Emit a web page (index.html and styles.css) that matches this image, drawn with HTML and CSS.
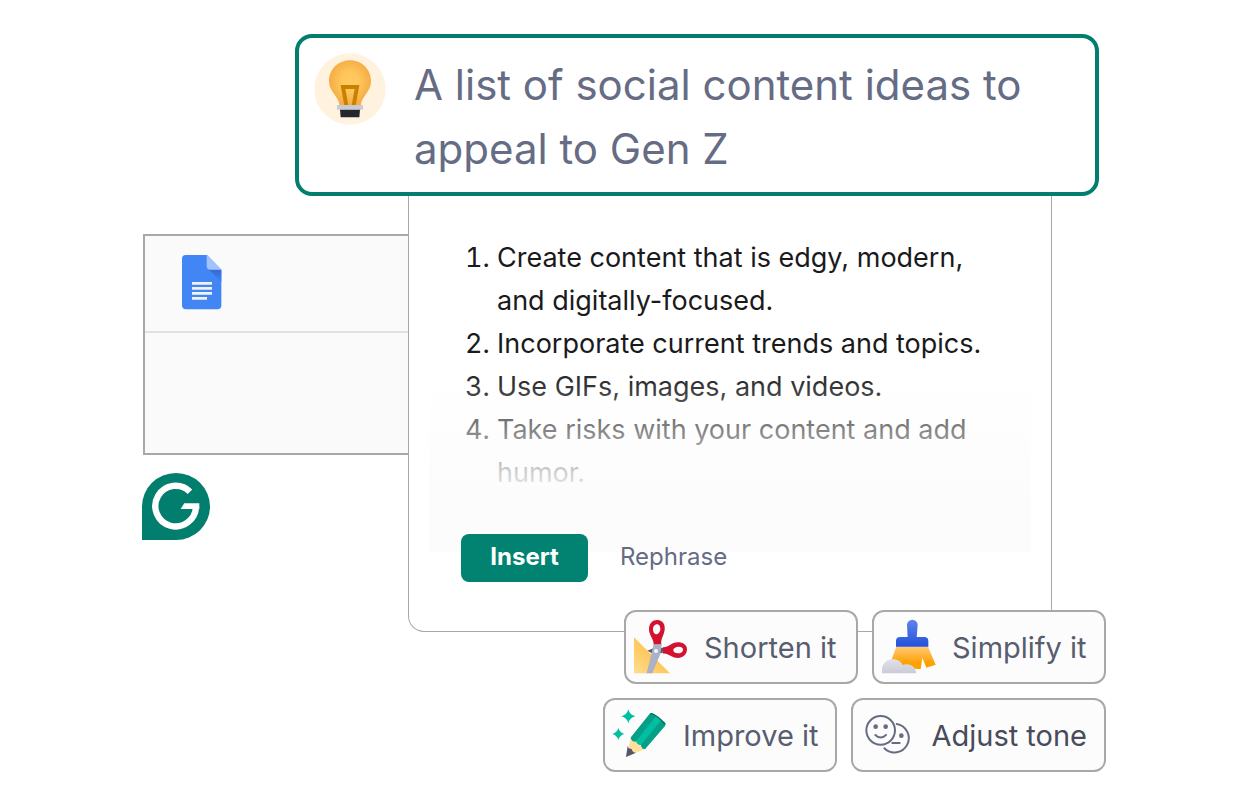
FILE: index.html
```html
<!DOCTYPE html>
<html lang="en">
<head>
    <meta charset="UTF-8">
    <meta name="viewport" content="width=device-width, initial-scale=1.0">
    <title>Content ideas</title>
    <link rel="stylesheet" href="styles.css">
</head>
<body>
    <div class="scene">
        <aside class="side">
            <div class="document">
                <div class="document-header">
                    <svg width="40" height="55" viewBox="0 0 120 165" role="img" aria-label="Document">
                        <defs>
                            <linearGradient id="fold" x1="0" y1="0" x2="0" y2="1">
                                <stop offset="0" stop-color="#3367d6"/>
                                <stop offset="1" stop-color="#4285f4"/>
                            </linearGradient>
                        </defs>
                        <path fill="#4285f4" d="M11 0h64l43 44v107q0 12-12 12H12Q0 163 0 151V11Q0 0 11 0z"/>
                        <path fill="url(#fold)" d="M79 42l39 39V44z"/>
                        <path fill="#a1c2fa" d="M74 0v33q0 11 11 11h34z"/>
                        <path fill="#f1f1f1" d="M30 81h60v8H30zM30 96h60v8H30zM30 111h60v8H30zM30 126h45v8H30z"/>
                    </svg>
                </div>
                <div class="document-body"></div>
            </div>
            <svg class="logo" width="68" height="67" viewBox="0 0 204 201" role="img" aria-label="Grammarly">
                <path fill="#027e6f" d="M102 0a102 100.500 0 0 1 0 201H0V100.500A102 100.500 0 0 1 102 0z"/>
                <path fill="none" stroke="#fff" stroke-width="19" d="M144 56A61 61 0 1 0 162 100"/>
                <path fill="#fff" d="M127 91h45v17h-56z"/>
            </svg>
        </aside>

        <main class="assistant">
            <section class="prompt">
                <svg class="bulb" width="72" height="72" viewBox="0 0 216 216" aria-hidden="true">
                    <defs>
                        <radialGradient id="glow" cx=".5" cy=".47" r=".5">
                            <stop offset="0" stop-color="#ffca60"/>
                            <stop offset=".4" stop-color="#fec75d"/>
                            <stop offset="1" stop-color="#f6ad45"/>
                        </radialGradient>
                    </defs>
                    <circle cx="108" cy="108" r="107" fill="#fff2de"/>
                    <path fill="url(#glow)" d="M108 22c36 0 63 28 63 62 0 34-28 43-31 75H77c-3-32-32-41-32-75 0-34 27-62 63-62z"/>
                    <path fill="none" stroke="#c98200" stroke-width="12" d="M97 158L87 102h42l-10 56"/>
                    <path fill="#c9cad7" d="M69 156h78v14H69z"/>
                    <path fill="#26272d" d="M78 170h60l-2 23H80z"/>
                </svg>
                <h1 class="prompt-text">A list of social content ideas to appeal to Gen Z</h1>
            </section>

            <section class="card">
                <div class="answer">
                    <ol class="ideas">
                        <li>Create content that is edgy, modern, and digitally-focused.</li>
                        <li>Incorporate current trends and topics.</li>
                        <li>Use GIFs, images, and videos.</li>
                        <li>Take risks with your content and add humor.</li>
                    </ol>
                </div>
                <div class="actions">
                    <button class="insert" type="button">Insert</button>
                    <button class="rephrase" type="button">Rephrase</button>
                </div>
            </section>

            <div class="chips">
                <button class="chip" type="button">
                    <svg width="56" height="56" viewBox="45 57 168 168" aria-hidden="true">
                        <defs>
                            <linearGradient id="ruler" x1="0" y1="1" x2=".6" y2=".4">
                                <stop offset="0" stop-color="#ffdd91"/>
                                <stop offset="1" stop-color="#fec34f"/>
                            </linearGradient>
                        </defs>
                        <path fill="url(#ruler)" d="M48 112l108 108H48z"/>
                        <path fill="#545b70" d="M88 152l18-7 30-2-2 16-29 2z"/>
                        <path fill="#d3122f" fill-rule="evenodd" d="M107 134c2-15-15-29-14-48 1-17 12-27 26-26 15 1 23 13 21 29-2 17-13 28-10 45zM117 73c-7 0-12 7-12 15s4 15 9 15c8 0 13-9 13-16 0-8-4-14-10-14z"/>
                        <path fill="#d3122f" fill-rule="evenodd" d="M135 142c16 1 26-15 44-15 17 0 28 8 28 21 0 15-12 26-28 26-19 0-27-15-44-13zM183 140c-8 0-17 4-17 11 0 6 6 9 14 9 9 0 15-5 15-11s-5-9-12-9z"/>
                        <path fill="#acb1c4" d="M107 133h24l-4 29-24 58H86l14-58z"/>
                        <circle cx="114" cy="153" r="6" fill="#f4f5fa"/>
                    </svg>
                    <span>Shorten it</span>
                </button>
                <button class="chip" type="button">
                    <svg width="56" height="56" viewBox="51 57 168 168" aria-hidden="true">
                        <defs>
                            <linearGradient id="handle" x1="0" y1="0" x2="0" y2="1">
                                <stop offset="0" stop-color="#6085ed"/>
                                <stop offset="1" stop-color="#2450dc"/>
                            </linearGradient>
                            <linearGradient id="bristles" x1="0" y1="0" x2="0" y2="1">
                                <stop offset="0" stop-color="#ffca73"/>
                                <stop offset=".75" stop-color="#fea000"/>
                            </linearGradient>
                            <linearGradient id="dust" x1="0" y1="0" x2="0" y2="1">
                                <stop offset="0" stop-color="#e0e1e9"/>
                                <stop offset="1" stop-color="#c9cbd8"/>
                            </linearGradient>
                        </defs>
                        <path fill="url(#bristles)" d="M97 140h95l23 54-28 9-12-30-5 34q-44 2-89-23z"/>
                        <path fill="url(#handle)" d="M129 75a16 16 0 0 1 32 0l-3 36h23q12 0 12 12v17H96v-17q0-12 12-12h23z"/>
                        <path fill="url(#dust)" d="M54 220v-10c0-18 13-32 32-32 15 0 25 7 30 17 18-7 39 4 40 21v4z"/>
                    </svg>
                    <span>Simplify it</span>
                </button>
                <button class="chip" type="button">
                    <svg width="56" height="56" viewBox="54 51 168 168" aria-hidden="true">
                        <path fill="#00bfa0" d="M103 58q4 17 21 21-17 4-21 21-4-17-21-21 17-4 21-21zM73 114q4 14 18 18-14 4-18 18-4-14-18-18 14-4 18-18z"/>
                        <path fill="#ffdf9d" d="M111 142l-15 58 60-24z"/>
                        <path fill="#535769" d="M101 168q2 9 12 9 2 11 13 11l-30 13z"/>
                        <path fill="#00bfa0" d="M167 72q4-5 11-1l34 26q5 4 1 10l-60 70q-9 1-12-12-10 2-15-11-11 3-16-11z"/>
                        <path fill="#069e87" d="M167 72q4-5 11-1l9 6-61 77q-11 3-16-11zM202 90l10 7q5 4 1 10l-60 70q-9 1-12-12z"/>
                        <path fill="none" stroke="#08745f" stroke-width="4" d="M170 71q12 2 24 12 11 8 18 20"/>
                    </svg>
                    <span>Improve it</span>
                </button>
                <button class="chip chip-dark" type="button">
                    <svg width="56" height="56" viewBox="45 51 168 168" aria-hidden="true">
                        <g fill="none" stroke="#656c84" stroke-width="6" stroke-linecap="round">
                            <circle cx="107" cy="121" r="43"/>
                            <path d="M91 135q16 15 32 0M155 102a43 43 0 1 1-37 73M142 159h22"/>
                        </g>
                        <g fill="#656c84">
                            <circle cx="92" cy="110" r="7"/>
                            <circle cx="122" cy="110" r="7"/>
                            <circle cx="169" cy="137" r="7"/>
                        </g>
                    </svg>
                    <span>Adjust tone</span>
                </button>
            </div>
        </main>
    </div>
</body>
</html>
```

FILE: styles.css
```css
* {
    box-sizing: border-box;
}
body {
    margin: 0;
    background-color: #fff;
    color: #1a1a1c;
    font-family: Inter, "Liberation Sans", sans-serif;
}
button {
    font-family: inherit;
    cursor: pointer;
}
svg {
    display: block;
    flex-shrink: 0;
}
.scene {
    display: flex;
    padding: 34px 142px;
}
.side {
    flex: 0 0 266px;
    padding-top: 200px;
}
.document {
    margin-left: 1px;
    border: 2px solid #a8a8a8;
    border-right: none;
    background-color: #fafafa;
}
.document-header {
    padding: 19px 37px 21px;
    border-bottom: 2px solid #e1e1e1;
}
.document-body {
    height: 120px;
}
.logo {
    margin-top: 18px;
}
.assistant {
    flex: 1;
    min-width: 0;
}
/* the prompt hangs over the document on the left */
.prompt {
    display: flex;
    align-items: flex-start;
    gap: 28px;
    margin: 0 7px 0 -113px;
    padding: 15px 32px 11px 15px;
    border: 4px solid #027e6f;
    border-radius: 17px;
    background-color: #fff;
}
.prompt-text {
    margin: 0;
    color: #656c84;
    font-size: 42px;
    font-weight: 400;
    line-height: 64px;
}
.card {
    margin-right: 54px;
    padding: 0 20px 49px;
    border: 1px solid #a8a8a8;
    border-top: none;
    border-radius: 0 0 16px 16px;
    background-color: #fff;
}
.answer {
    position: relative;
    height: 356px;
    padding: 40px 32px 0 36px;
}
/* fades the end of the list out */
.answer::after {
    content: "";
    position: absolute;
    inset: 156px 0 0;
    background: linear-gradient(rgba(252, 252, 252, 0), rgba(252, 252, 252, 0.1) 16%, rgba(252, 252, 252, 0.45) 38%, rgba(252, 252, 252, 0.8) 60%, #fcfcfc 75%);
}
.ideas {
    margin: 0;
    padding-left: 32px;
    font-size: 27px;
    line-height: 43px;
}
.actions {
    position: relative;
    display: flex;
    gap: 32px;
    margin: -18px 0 0 32px;
}
.insert,
.rephrase {
    height: 48px;
    padding: 0 0 3px;
    border: none;
    border-radius: 8px;
    font-size: 24px;
}
.insert {
    width: 127px;
    background-color: #028372;
    color: #fff;
    font-weight: 700;
}
.rephrase {
    background: none;
    color: #656c84;
}
.chips {
    position: relative;
    display: flex;
    flex-wrap: wrap;
    justify-content: flex-end;
    gap: 14px;
    margin-top: -22px;
}
.chip {
    display: flex;
    align-items: center;
    justify-content: flex-start;
    gap: 15px;
    min-width: 234px;
    height: 74px;
    padding: 0 17px 0 7px;
    border: 2px solid #a8a8a8;
    border-radius: 12px;
    background-color: #fcfcfc;
    color: #585d70;
    font-size: 29px;
}
.chip-dark {
    color: #484b59;
}
```
